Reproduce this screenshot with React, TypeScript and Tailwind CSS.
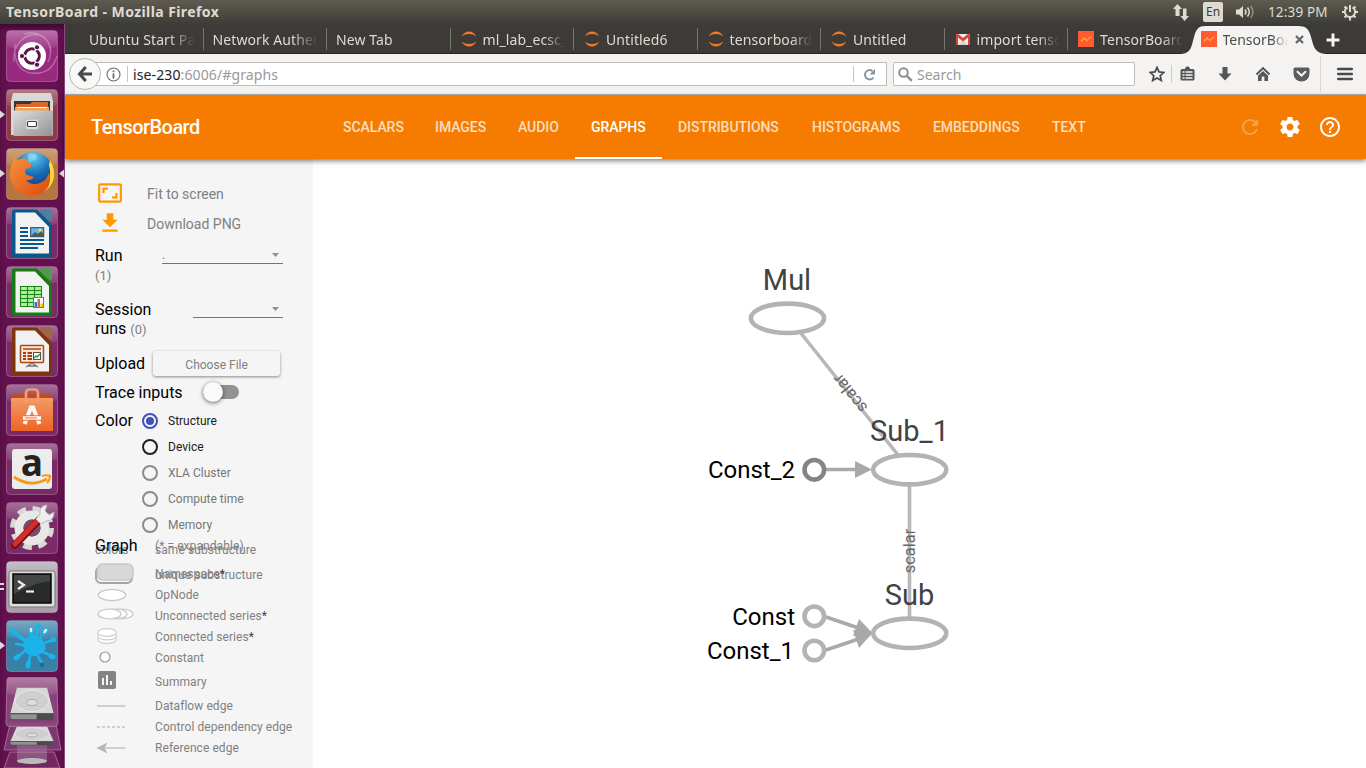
import React from "react";

const UI = "font-['Noto_Sans','Open_Sans',sans-serif]";

function Jupyter() {
  return (
    <svg width="16" height="16" viewBox="0 0 16 16" className="shrink-0">
      <path d="M.8 5.6C2.2 2.4 5 .6 8 .6s5.800 1.800 7.200 5C13.300 3.900 10.800 3.100 8 3.100S2.700 3.900.8 5.600z" fill="#f37726" />
      <path d="M.8 10.400C2.200 13.600 5 15.400 8 15.400s5.800-1.800 7.200-5c-1.900 1.700-4.400 2.500-7.200 2.500s-5.300-.8-7.200-2.500z" fill="#f37726" />
    </svg>
  );
}

function Gmail() {
  return (
    <svg width="16" height="16" viewBox="0 0 16 16" className="shrink-0">
      <rect x="1" y="3" width="14" height="11" rx="1" fill="#eee" />
      <path d="M3 14l5-5 5 5z" fill="#d5d5d5" />
      <path d="M1 14V4.500C1 3 2.500 2.500 3.500 3.300L8 7l4.500-3.700C13.500 2.500 15 3 15 4.500V14h-2V6.500L8 10.500 3 6.500V14z" fill="#d9453a" />
    </svg>
  );
}

function TbIcon() {
  return (
    <svg width="16" height="16" viewBox="0 0 16 16" className="shrink-0">
      <rect width="16" height="16" fill="#ff5a30" />
      <path d="M3 10.500L6.200 7l2.600 2.600L13 5.500" fill="none" stroke="#ffb02e" strokeWidth="1.300" />
    </svg>
  );
}

const tabs = [
  { label: "Ubuntu Start Page", icon: null },
  { label: "Network Authentication", icon: null },
  { label: "New Tab", icon: null },
  { label: "ml_lab_ecsc_306", icon: <Jupyter /> },
  { label: "Untitled6", icon: <Jupyter /> },
  { label: "tensorboard_basic", icon: <Jupyter /> },
  { label: "Untitled", icon: <Jupyter /> },
  { label: "import tensorflow", icon: <Gmail /> },
  { label: "TensorBoard", icon: <TbIcon /> },
];

function TopPanel() {
  return (
    <header className={`flex h-6 shrink-0 items-center justify-between bg-linear-to-b from-[#5e5b50] to-[#3e3d38] pl-1.5 pr-[7px] text-[#dfdbd2] ${UI}`}>
      <span className="text-[14px] leading-6 font-bold tracking-[0.42px]">TensorBoard - Mozilla Firefox</span>
      <div className="flex items-center">
        <svg width="18" height="18" viewBox="0 0 18 18" fill="#dfdbd2">
          <path d="M5.500 1l4.500 5H7.500v7h-4V6H1zM12.500 18L8.500 13H11V5.500h3.500V13H17z" />
        </svg>
        <span className="ml-[13px] flex h-5 w-5 items-center justify-center rounded-[2px] bg-[#dfdbd2] text-[12px] text-[#3c3b37]">En</span>
        <svg width="22" height="18" viewBox="0 0 22 18" className="ml-3" fill="none" stroke="#dfdbd2" strokeWidth="1.500">
          <path d="M1 6.500h3L8 3v12l-4-3.500H1z" fill="#dfdbd2" stroke="none" />
          <path d="M10 6.500q2 2.500 0 5M12.500 4.500q3.500 4.500 0 9" />
          <path d="M15.500 3q5 6 0 12" opacity=".45" />
        </svg>
        <span className="ml-[11px] w-[62px] text-[13.500px] tracking-[0.15px] whitespace-nowrap">12:39 PM</span>
        <svg width="18" height="18" viewBox="0 0 18 18" className="ml-[11px]" fill="none" stroke="#dfdbd2">
          <path d="M6.500 4.300a5.200 5.200 0 1 0 5 0" strokeWidth="2" />
          <path d="M9 2v7" strokeWidth="2" />
          <path d="M3.500 3.500l2 2M14.500 3.500l-2 2M1 9h3M14 9h3M3.500 14.500l2-2M14.500 14.500l-2-2M9 14v3.500" strokeWidth="2" />
        </svg>
      </div>
    </header>
  );
}

function TabStrip() {
  return (
    <div className={`flex h-[30px] shrink-0 border-b border-[#262522] bg-[#3c3b37] pl-[15px] text-[14px] text-[#dfdbd2] ${UI}`}>
      {tabs.map((t, i) => (
        <div key={i} className="flex h-[30px] w-[123.5px] shrink-0 items-center">
          <div className={`flex min-w-0 flex-1 items-center gap-[6px] ${t.icon ? "pl-[10px]" : "pl-[9px]"}`}>
            {t.icon}
            <span className="flex-1 overflow-hidden mask-r-from-75% whitespace-nowrap tracking-[0.1px]">{t.label}</span>
          </div>
          <span className={`ml-[8px] h-[22px] w-px ${i === 8 ? "bg-transparent" : "bg-[#77756e]"}`} />
        </div>
      ))}
      <div className="relative -ml-[11px] h-[30px] w-[146px] shrink-0">
        <svg width="146" height="30" viewBox="0 0 146 30" className="absolute inset-0">
          <path d="M0 30C10 29 10 24 13 13C15 5 18 2 24 2H117C125 2 128 5 130 13C133 24 134 29 145 30z" fill="#f4f3f1" />
        </svg>
        <div className="relative flex h-[30px] items-center pl-[20px] text-[#4c4c4c]">
          <TbIcon />
          <span className="ml-1.5 w-[65px] overflow-hidden mask-r-from-75% whitespace-nowrap">TensorBoard</span>
          <svg width="9" height="9" viewBox="0 0 9 9" className="ml-[7px]"><path d="M1 1l7 7M8 1L1 8" stroke="#666" strokeWidth="2.300" /></svg>
        </div>
      </div>
      <svg width="14" height="14" viewBox="0 0 14 14" className="-ml-[1px] mt-[9px]"><path d="M7 0.500v13M.5 7h13" stroke="#f4f3f1" strokeWidth="3" /></svg>
    </div>
  );
}

function NavBar() {
  return (
    <div className={`flex h-[41px] shrink-0 items-center border-b border-[#b6b4b0] bg-[#f4f3f1] text-[14px] ${UI}`}>
      <div className="z-10 ml-[4px] flex h-8 w-8 shrink-0 items-center justify-center rounded-full border border-[#b9b7b3] bg-[#f8f8f7]">
        <svg width="16" height="16" viewBox="0 0 16 16" fill="none" stroke="#4a4a4a" strokeWidth="3"><path d="M8.800 1L2.500 8l6.300 7M2.800 8H15" /></svg>
      </div>
      <div className="-ml-[7px] flex h-6 w-[793px] shrink-0 items-center border border-[#bfbdb8] bg-white pl-[11px]">
        <svg width="15" height="15" viewBox="0 0 15 15" fill="none" stroke="#6b6b6b"><circle cx="7.500" cy="7.500" r="6.500" strokeWidth="1.100" /><path d="M7.500 6.500v5M7.500 3.500v1.700" strokeWidth="1.800" /></svg>
        <span className="ml-[6px] h-4 w-px bg-[#c4c4c4]" />
        <span className="ml-[5px] text-[#999] tracking-[0.12px]"><span className="text-[#222]">ise-230</span>:6006/#graphs</span>
        <span className="ml-auto h-4 w-px bg-[#c4c4c4]" />
        <svg width="13" height="13" viewBox="0 0 13 13" className="mr-[10px] ml-[9px]" fill="none" stroke="#8392a2" strokeWidth="1.900"><path d="M10.500 9.500A4.700 4.700 0 1 1 9.500 3" /><path d="M12 1v5.500H6.500z" fill="#8392a2" stroke="none" /></svg>
      </div>
      <div className="ml-[6px] flex h-6 w-[242px] shrink-0 items-center rounded-[2px] border border-[#bfbdb8] bg-white pl-1">
        <svg width="15" height="15" viewBox="0 0 15 15" fill="none" stroke="#8f8f8f"><circle cx="5.500" cy="5.500" r="4.300" strokeWidth="2" /><path d="M8.800 8.800l5 5" strokeWidth="2.500" /></svg>
        <span className="ml-1 text-[#999]">Search</span>
      </div>
      <svg width="16" height="16" viewBox="0 0 16 16" className="ml-[14px]"><path d="M8 1.400l2 4.500 4.900.5-3.700 3.300 1.100 4.800L8 12l-4.300 2.500 1.100-4.800L1.100 6.400 6 5.900z" fill="none" stroke="#4a4a4a" strokeWidth="1.700" /></svg>
      <span className="ml-[6px] h-[18px] w-px bg-[#cfcdc9]" />
      <svg width="15" height="16" viewBox="0 0 15 16" className="ml-[8px]"><path d="M2 3h3a2.500 2.500 0 0 1 5 0h3q1.500 0 1.500 1.500v8.500q0 1.500-1.500 1.500H2Q.5 14.500.5 13V4.500Q.5 3 2 3z" fill="#555" /><path d="M2.500 6h2M5.500 6h7M2.500 9h2M5.500 9h7M2.500 12h2M5.500 12h7" stroke="#f4f3f1" strokeWidth="1.500" /></svg>
      <svg width="14" height="16" viewBox="0 0 14 16" className="ml-[23px]"><path d="M4.500 1h5v6.500h4L7 14.500.5 7.500h4z" fill="#555" /></svg>
      <svg width="16" height="16" viewBox="0 0 16 16" className="ml-[23px]"><path d="M8 .8L.8 7.800l1.400 1.400L8 3.600l5.800 5.600 1.400-1.400z M3 9.700L8 5l5 4.700v5.300H9.400v-4.500H6.600V15H3z" fill="#555" /></svg>
      <svg width="17" height="15" viewBox="0 0 17 15" className="ml-[22px]"><path d="M2 .5h13q1.500 0 1.500 1.500v4.500a8 8 0 0 1-16 0V2Q.5.5 2 .5z" fill="#5c5c5c" /><path d="M4.500 4.700l4 3.800 4-3.800" fill="none" stroke="#f4f3f1" strokeWidth="2" strokeLinecap="round" /></svg>
      <span className="ml-[10px] h-9 w-px bg-[#d9d7d3]" />
      <svg width="16" height="14" viewBox="0 0 16 14" className="ml-[16px]"><path d="M1.200 2h13.600M1.200 7h13.600M1.200 12h13.600" stroke="#4a4a4a" strokeWidth="2.600" strokeLinecap="round" /></svg>
    </div>
  );
}

const navItems = [
  { label: "SCALARS", w: "w-[92px]" },
  { label: "IMAGES", w: "w-[83px]" },
  { label: "AUDIO", w: "w-[73px]" },
  { label: "GRAPHS", w: "w-[87px]" },
  { label: "DISTRIBUTIONS", w: "w-[134px]" },
  { label: "HISTOGRAMS", w: "w-[121px]" },
  { label: "EMBEDDINGS", w: "w-[119px]" },
  { label: "TEXT", w: "w-[67px]" },
];

function AppBar() {
  return (
    <div className="z-10 flex h-16 shrink-0 items-center bg-[#f57c00] pl-[26px] font-[Roboto,sans-serif] text-white shadow-[0_2px_5px_rgba(0,0,0,0.5)]">
      <span className="w-[236px] text-[20px] font-medium tracking-[-0.55px]">TensorBoard</span>
      <nav className="flex h-full">
        {navItems.map((t) => (
          <span key={t.label} className={`flex h-full shrink-0 items-center border-b-2 pt-[2px] pl-4 text-[14px] font-medium tracking-[-0.05px] ${t.w} ${t.label === "GRAPHS" ? "border-white" : "border-transparent text-white/75"}`}>{t.label}</span>
        ))}
      </nav>
      <div className="ml-auto flex items-center gap-4 pr-6">
        <svg width="24" height="24" viewBox="0 0 24 24" fill="#fff" opacity=".28"><path d="M17.650 6.350C16.200 4.900 14.210 4 12 4c-4.420 0-7.990 3.580-7.990 8s3.570 8 7.990 8c3.730 0 6.840-2.550 7.730-6h-2.080c-.82 2.330-3.040 4-5.650 4-3.310 0-6-2.690-6-6s2.690-6 6-6c1.660 0 3.140.69 4.220 1.780L13 11h7V4l-2.350 2.350z" /></svg>
        <svg width="24" height="24" viewBox="0 0 24 24" fill="#fff"><path d="M19.430 12.980c.04-.32.07-.64.07-.98s-.03-.66-.07-.98l2.110-1.650c.19-.15.24-.42.12-.64l-2-3.460c-.12-.22-.39-.3-.61-.22l-2.490 1c-.52-.4-1.080-.73-1.690-.98l-.38-2.650C14.460 2.180 14.250 2 14 2h-4c-.25 0-.46.18-.49.42l-.38 2.650c-.61.25-1.170.59-1.690.98l-2.490-1c-.23-.09-.49 0-.61.22l-2 3.460c-.13.22-.07.49.12.64l2.110 1.650c-.04.32-.07.65-.07.98s.03.66.07.98l-2.110 1.650c-.19.15-.24.42-.12.64l2 3.460c.12.22.39.3.61.22l2.490-1c.52.4 1.080.73 1.690.98l.38 2.650c.03.24.24.42.49.42h4c.25 0 .46-.18.49-.42l.38-2.650c.61-.25 1.170-.59 1.690-.98l2.490 1c.23.09.49 0 .61-.22l2-3.460c.12-.22.07-.49-.12-.64l-2.110-1.650zM12 15.500c-1.930 0-3.500-1.570-3.500-3.500s1.570-3.500 3.500-3.500 3.500 1.570 3.500 3.500-1.570 3.500-3.500 3.500z" /></svg>
        <svg width="24" height="24" viewBox="0 0 24 24" fill="#fff"><path d="M11 18h2v-2h-2v2zm1-16C6.480 2 2 6.480 2 12s4.480 10 10 10 10-4.480 10-10S17.520 2 12 2zm0 18c-4.410 0-8-3.590-8-8s3.590-8 8-8 8 3.590 8 8-3.590 8-8 8zm0-14c-2.210 0-4 1.790-4 4h2c0-1.100.9-2 2-2s2 .9 2 2c0 2-3 1.750-3 5h2c0-2.250 3-2.500 3-5 0-2.210-1.790-4-4-4z" /></svg>
      </div>
    </div>
  );
}

function Dropdown({ value, width }: { value: string; width: string }) {
  return (
    <div className={`mr-[30px] ml-auto flex h-[18px] items-center justify-between border-b border-[#757575] pt-px text-[12px] text-[#777] ${width}`}>
      <span>{value}</span>
      <svg width="7" height="4" viewBox="0 0 7 4" className="mr-1"><path d="M0 0h7L3.500 4z" fill="#8f8f8f" /></svg>
    </div>
  );
}

const radios = [
  { label: "Structure", on: true, color: "#3f51b5", cls: "text-[#212121]" },
  { label: "Device", on: false, color: "#212121", cls: "text-[#212121]" },
  { label: "XLA Cluster", on: false, color: "#8b8b8b", cls: "text-[#777]" },
  { label: "Compute time", on: false, color: "#8b8b8b", cls: "text-[#777]" },
  { label: "Memory", on: false, color: "#8b8b8b", cls: "text-[#777]" },
];

function LegendRow({ label, star, h, children }: { label: string; star?: boolean; h: string; children: React.ReactNode }) {
  return (
    <div className={`flex items-center ${h}`}>
      <div className="flex w-[60px] shrink-0 items-center">{children}</div>
      <span className="whitespace-nowrap">{label}{star && <span className="text-[#444]">*</span>}</span>
    </div>
  );
}

function Sidebar() {
  return (
    <aside className="flex w-[248px] shrink-0 flex-col overflow-hidden bg-[#f5f5f5] pt-5 pl-[30px] font-[Roboto,sans-serif] text-[12px] text-[#808080]">
      <div className="flex h-[30px] shrink-0 items-center text-[14px]">
        <svg width="26" height="26" viewBox="0 0 24 24" fill="#ff9800" className="-mt-[2px] ml-[2px]"><path d="M19 12h-2v3h-3v2h5v-5zM7 9h3V7H5v5h2V9zm14-6H3c-1.100 0-2 .9-2 2v14c0 1.100.9 2 2 2h18c1.100 0 2-.9 2-2V5c0-1.100-.9-2-2-2zm0 16.010H3V4.990h18v14.020z" /></svg>
        <span className="ml-6">Fit to screen</span>
      </div>
      <div className="flex h-[30px] shrink-0 items-center text-[14px]">
        <svg width="26" height="26" viewBox="0 0 24 24" fill="#ff9800" className="-mt-[2px] ml-[2px]"><path d="M19 9h-4V3H9v6H5l7 7 7-7zM5 18v2h14v-2H5z" /></svg>
        <span className="ml-6">Download PNG</span>
      </div>
      <div className="mt-[7px] flex h-[54px] shrink-0 items-start">
        <div className="flex flex-col text-[16px] leading-[19px] text-black">Run<span className="text-[13px] leading-[21px] text-[#808080]">(1)</span></div>
        <Dropdown value="." width="w-[121px]" />
      </div>
      <div className="flex h-[50px] shrink-0 items-start">
        <div className="w-[70px] text-[16px] leading-[19px] text-black">Session runs <span className="text-[13px] text-[#808080]">(0)</span></div>
        <Dropdown value="" width="w-[90px]" />
      </div>
      <div className="flex h-[26px] shrink-0 items-center">
        <span className="pt-[2px] text-[16px] text-black">Upload</span>
        <span className="ml-2 flex h-[25px] w-[127px] items-center justify-center rounded-[3px] bg-[#f5f5f5] pt-[4px] shadow-[0_1px_3px_rgba(0,0,0,0.45)]">Choose File</span>
      </div>
      <div className="flex h-8 shrink-0 items-center">
        <span className="w-[108px] pt-[2px] text-[16px] text-black">Trace inputs</span>
        <span className="flex h-[14px] w-9 items-center rounded-full bg-[#929292]">
          <span className="h-5 w-5 shrink-0 rounded-full bg-[#fafafa] shadow-[0_1px_4px_rgba(0,0,0,0.6)]" />
        </span>
      </div>
      <div className="flex h-[130px] shrink-0">
        <span className="w-[47px] pt-[2px] text-[16px] leading-[22px] text-black">Color</span>
        <div className="flex flex-col">
          {radios.map((r) => (
            <div key={r.label} className="flex h-[26px] items-center">
              <svg width="16" height="16" viewBox="0 0 16 16"><circle cx="8" cy="8" r="7" fill="none" stroke={r.color} strokeWidth="2" />{r.on && <circle cx="8" cy="8" r="4" fill={r.color} />}</svg>
              <span className={`ml-[10px] ${r.cls}`}>{r.label}</span>
            </div>
          ))}
        </div>
      </div>
      <div className="relative -mt-[2px] flex h-[20px] shrink-0 items-center tracking-[0.07px]">
        <div className="absolute top-[6px] left-0 w-[218px]">
          <div className="flex h-[16px] items-center"><span className="w-[60px]">colors</span><span>same substructure</span></div>
          <div className="mt-[9px] flex h-[16px] items-center">
            <span className="h-[18px] w-[38px] rounded-[6px] border-2 border-[#a5a5a5]" /><span className="ml-[22px]">unique substructure</span>
          </div>
        </div>
        <span className="relative w-[60px] text-[16px] tracking-normal text-black">Graph</span><span className="relative">(* = expandable)</span>
      </div>
      <div className="relative mt-[7px] tracking-[0.07px]">
        <LegendRow label="Namespace" star h="h-[21px]"><svg width="40" height="20" viewBox="0 0 40 20" className="-mt-[1px]"><rect x="2.500" y="1" width="35.500" height="16" rx="5.500" fill="#d8d8d8" stroke="#c8c8c8" strokeWidth="1.600" /></svg></LegendRow>
        <LegendRow label="OpNode" h="h-[21px]"><svg width="40" height="14" viewBox="0 0 40 14"><ellipse cx="17" cy="7" rx="13.700" ry="5.600" fill="#fff" stroke="#c8c8c8" strokeWidth="1.400" /></svg></LegendRow>
        <LegendRow label="Unconnected series" star h="h-[21px]"><svg width="40" height="14" viewBox="0 0 40 14" className="-mt-[3px]" fill="#fff" stroke="#ccc" strokeWidth="1.400"><ellipse cx="26.500" cy="7" rx="11.500" ry="4.900" /><ellipse cx="20.500" cy="7" rx="11.500" ry="4.900" /><ellipse cx="14.500" cy="7" rx="11.500" ry="4.900" /></svg></LegendRow>
        <LegendRow label="Connected series" star h="h-[21px]"><svg width="40" height="18" viewBox="0 0 40 18" className="-mt-[2px]" fill="#fff" stroke="#ccc" strokeWidth="1.200"><ellipse cx="12" cy="12.500" rx="9.300" ry="3.900" /><ellipse cx="12" cy="9" rx="9.300" ry="3.900" /><ellipse cx="12" cy="5.500" rx="9.300" ry="3.900" /></svg></LegendRow>
        <LegendRow label="Constant" h="h-[21px]"><svg width="20" height="14" viewBox="0 0 20 14" className="-mt-[2px]"><circle cx="10" cy="7" r="5" fill="#fff" stroke="#999" strokeWidth="1.200" /></svg></LegendRow>
        <LegendRow label="Summary" h="h-[27px]"><svg width="24" height="24" viewBox="0 0 24 24" fill="#848484" className="-mt-[3px]"><path d="M19 3H5c-1.100 0-2 .9-2 2v14c0 1.100.9 2 2 2h14c1.100 0 2-.9 2-2V5c0-1.100-.9-2-2-2zM9 17H7v-7h2v7zm4 0h-2V7h2v10zm4 0h-2v-4h2v4z" /></svg></LegendRow>
        <LegendRow label="Dataflow edge" h="h-[21px]"><svg width="40" height="4"><path d="M2 2h28.500" stroke="#c2c2c2" strokeWidth="1.500" /></svg></LegendRow>
        <LegendRow label="Control dependency edge" h="h-[21px]"><svg width="40" height="4"><path d="M2 2h28" stroke="#c2c2c2" strokeWidth="1.500" strokeDasharray="3 2" /></svg></LegendRow>
        <LegendRow label="Reference edge" h="h-[21px]"><svg width="40" height="12" viewBox="0 0 40 12"><path d="M8 6h22.500" stroke="#c2c2c2" strokeWidth="1.500" /><path d="M1.500 6L12.500.5 9.500 6l3 5.500z" fill="#b5b5b5" /></svg></LegendRow>
      </div>
    </aside>
  );
}

function Graph() {
  return (
    <svg width="1053" height="609" viewBox="313 159 1053 609" className="min-w-0 flex-1 bg-white font-[Roboto,sans-serif]">
      <g stroke="#b8b8b8" strokeWidth="3.600" fill="none">
        <path d="M800 332L898 455" />
        <path d="M909.500 485V618" />
      </g>
      <g stroke="#a9a9a9" strokeWidth="3.600">
        <path d="M826 469.500H858M826 617L860 628.500M826 650L860 638.500" />
      </g>
      <g fill="#a9a9a9">
        <path d="M855 461L872 469.500 855 478z" />
        <path d="M859 619L872.500 633 853 636z" />
        <path d="M859 648L872.500 633 853 630z" />
      </g>
      <g fill="#fff" stroke="#b3b3b3" strokeWidth="4.600">
        <ellipse cx="787.500" cy="318.300" rx="36.600" ry="14.700" />
        <ellipse cx="909.700" cy="469.700" rx="36.600" ry="14.700" />
        <ellipse cx="909.700" cy="633.300" rx="36.600" ry="14.700" />
        <circle cx="814.300" cy="616.300" r="9.800" />
        <circle cx="814.300" cy="650.500" r="9.800" />
        <circle cx="814.300" cy="469.800" r="9.800" stroke="#848484" />
      </g>
      <g fill="#424242" fontSize="29" textAnchor="middle">
        <text x="787" y="290">Mul</text>
        <text x="909.500" y="441">Sub_1</text>
        <text x="909.500" y="605">Sub</text>
      </g>
      <g fill="#000" fontSize="24" textAnchor="end">
        <text x="795" y="478">Const_2</text>
        <text x="795" y="625">Const</text>
        <text x="794" y="659">Const_1</text>
      </g>
      <g fill="#666" fontSize="16.500" textAnchor="middle">
        <text transform="translate(909 551) rotate(-90)" y="5.500">scalar</text>
        <text transform="translate(850 393.500) rotate(231.400)" y="5.500">scalar</text>
      </g>
    </svg>
  );
}

function Doc({ edge, children }: { edge: string; children: React.ReactNode }) {
  return (
    <>
      <path d="M6 4Q6 2.500 8 2.500H31L46 18V48Q46 50 44 50H8Q6 50 6 48z" fill={edge} />
      <path d="M34 2.500H44Q46 2.500 46 4.500V15Q38 12 34 2.500z" fill={edge} />
      <path d="M34 2.500H44Q46 2.500 46 4.500V15Q38 12 34 2.500z" fill="#fff" opacity=".25" />
      <path d="M9.500 5.500H29L43 20V46.500H9.500z" fill="#f2f2f2" />
      {children}
    </>
  );
}

function Tile({ bg, children, mark }: { bg: string; children: React.ReactNode; mark?: string }) {
  return (
    <div className="relative flex h-[52px] shrink-0 pl-[6px]">
      <svg width="52" height="52" viewBox="0 0 52 52">
        <rect x=".5" y=".5" width="51" height="51" rx="4" fill={bg} stroke="#fff" strokeOpacity=".25" />
        <path d="M4 1H48Q51 1 51 4V16Q26 26 1 16V4Q1 1 4 1z" fill="url(#gloss)" />
        {children}
      </svg>
      {mark && (
        <svg width="65" height="52" viewBox="0 0 65 52" className="absolute top-0 left-0" fill="#dcd8dc">
          {mark === "two" ? <path d="M0 22h4v2H0zM0 27h4v2H0z" /> : <path d="M0 21.500L5 25.500 0 29.500z" />}
          {mark === "active" && <path d="M64 21.500L59 25.500 64 29.500z" />}
        </svg>
      )}
    </div>
  );
}

function Disk() {
  return (
    <>
      <path d="M9 9H41L48 35H2z" fill="#d6d6d6" />
      <path d="M2 35H48V40Q48 42 46 42H4Q2 42 2 40z" fill="#4c4c4c" />
      <path d="M2 36H30V41H4Q2 41 2 39z" fill="#929292" />
      <ellipse cx="25" cy="22.500" rx="18" ry="11" fill="#cfcfcf" stroke="#e8e8e8" />
      <ellipse cx="25" cy="24" rx="6" ry="3.200" fill="#ddd" stroke="#a6a6a6" />
    </>
  );
}

function Launcher() {
  return (
    <div className="flex w-[65px] shrink-0 flex-col gap-[7px] overflow-hidden border-r-[1.500px] border-[#8a4a80] bg-[#64114f] pt-[6px] shadow-[inset_0_5px_6px_-2px_rgba(20,0,20,0.6)]">
      <svg width="0" height="0" className="absolute">
        <defs>
          <linearGradient id="gloss" x1="0" y1="0" x2="0" y2="1"><stop offset="0" stopColor="#fff" stopOpacity=".32" /><stop offset="1" stopColor="#fff" stopOpacity=".04" /></linearGradient>
          <linearGradient id="steel" x1="0" y1="0" x2="1" y2="1"><stop offset="0" stopColor="#dedede" /><stop offset="1" stopColor="#929292" /></linearGradient>
          <radialGradient id="globe" cx=".5" cy=".1" r=".8"><stop offset="0" stopColor="#5fd0f5" /><stop offset=".6" stopColor="#1769b5" /><stop offset="1" stopColor="#123f87" /></radialGradient>
          <linearGradient id="fox" x1="0" y1="0" x2="1" y2="1"><stop offset="0" stopColor="#f7923c" /><stop offset="1" stopColor="#dc4a10" /></linearGradient>
          <linearGradient id="bag" x1="0" y1="0" x2="0" y2="1"><stop offset="0" stopColor="#f29a66" /><stop offset="1" stopColor="#ee6428" /></linearGradient>
        </defs>
      </svg>
      <Tile bg="#982b80">
        <g fill="none" stroke="#fff" strokeOpacity=".3" strokeWidth="1.300"><path d="M8 32C6 14 20 2 34 5C44 9 47 22 42 32M9 14C7 35 16 45 33 43C42 42 48 36 51 26M18 4C31 0 44 7 45 22" /></g>
        <circle cx="26" cy="26" r="14" fill="#fff" />
        <circle cx="26" cy="26" r="7.300" fill="none" stroke="#5b154a" strokeWidth="3" />
        <path d="M26 26L13 26M26 26L32.500 14.700M26 26L32.500 37.300" stroke="#fff" strokeWidth="1.500" />
        <circle cx="26" cy="26" r="5.500" fill="#fff" />
        <g fill="#5b154a" stroke="#fff" strokeWidth="1"><circle cx="16" cy="26" r="2.600" /><circle cx="31" cy="17.300" r="2.600" /><circle cx="31" cy="34.700" r="2.600" /></g>
      </Tile>
      <Tile bg="#8d3b46" mark="one">
        <path d="M7 4H45L47 12V46H5V12z" fill="#d8d8d8" />
        <rect x="8" y="12" width="36" height="12" fill="#3b3532" />
        <path d="M10 15H24L26 13H42V24H10z" fill="#d9692e" /><path d="M9 18H43V24H9z" fill="#f4a24e" /><path d="M11 18.500H41" stroke="#fff" />
        <path d="M7 21.500H47L46.500 47H7.500z" fill="url(#steel)" />
        <rect x="19.500" y="30" width="13" height="10.500" rx="2" fill="#ddd" stroke="#b5b5b5" /><rect x="21.500" y="32.500" width="9" height="5" rx="1" fill="#fff" stroke="#444" strokeWidth="1.200" />
      </Tile>
      <Tile bg="#b6763f" mark="active">
        <circle cx="27" cy="24" r="20" fill="url(#globe)" />
        <path d="M22 6C30 4 33 9 30 12C25 12 22 16 23 20z" fill="#fff" opacity=".25" />
        <path d="M40 12C47 21 45 34 36 41L30 46C43 44 49 34 48 24C47.500 18 45 14 44 12L43 17z" fill="#ffd83a" />
        <path d="M7 13L9 8L11 12L18 10Q21 11 22 15L25 16V19L20 21Q18 25 21 27L28 29Q25 33 20 32C24 38 34 37 40 31L43 25C47 37 39 47 27 47.500C13 48 3 37 4 24Q5 17 7 13z" fill="url(#fox)" />
      </Tile>
      <Tile bg="#7b2c68">
        <Doc edge="#08588b">
          <path d="M14 21H22M14 25H22M14 29H22M14 33H38M14 37H38M14 41H32" stroke="#085889" strokeWidth="1.800" />
          <rect x="24.700" y="20.700" width="13" height="9" fill="#6db5ee" stroke="#134466" /><path d="M25 29L29 25L32 27L35 24L37.500 27V29z" fill="#5f5b30" /><circle cx="34" cy="23" r="1.500" fill="#ffe14a" />
        </Doc>
      </Tile>
      <Tile bg="#7b2c68">
        <Doc edge="#137d12">
          <path d="M14.500 20.500H35.500V40.500H14.500zM14.500 24.500H35.500M14.500 28.500H35.500M14.500 32.500H35.500M14.500 36.500H35.500M21.500 20.500V40.500M28.500 20.500V40.500" fill="#b4ec9e" stroke="#168614" strokeWidth="1.100" />
          <rect x="27.500" y="31.500" width="10" height="10" fill="#fff" stroke="#777" /><path d="M28.500 36H31V41H28.500z" fill="#1a85d6" /><path d="M31.500 33H34V41H31.500z" fill="#e86427" /><path d="M34.500 37.500H37V41H34.500z" fill="#f7c600" />
        </Doc>
      </Tile>
      <Tile bg="#7b2c68">
        <Doc edge="#803407">
          <rect x="14.500" y="20.500" width="23" height="17" rx="1" fill="#fbe9dd" stroke="#a74818" strokeWidth="1.500" />
          <path d="M17 24H35" stroke="#d2662f" strokeWidth="2" /><path d="M17 28H20M17 31H20M17 34H20M21.500 28H26M21.500 31H26M21.500 34H26" stroke="#a13d12" strokeWidth="1.800" />
          <rect x="27.500" y="27.500" width="7" height="7" fill="#fff" stroke="#555" /><path d="M28 33L30 31L31 32L34 29" stroke="#22a03a" strokeWidth="1.400" fill="none" /><path d="M26 38L20 42M26 38L32 42M22 41H30" stroke="#777" strokeWidth="1.500" />
        </Doc>
      </Tile>
      <Tile bg="#7b2c68">
        <path d="M5 14H47V47H5z" fill="url(#bag)" /><path d="M5 14L8 10H44L47 14z" fill="#bd4c20" />
        <path d="M20 19V9Q20 5.500 24 5.500H28Q32 5.500 32 9V19" fill="none" stroke="#f29b72" strokeWidth="2.700" />
        <path d="M18.500 40L25 23.500H27L33.500 40" fill="none" stroke="#fff" strokeWidth="4" /><path d="M17 34H35" stroke="#ed6b33" strokeWidth="5.500" /><path d="M17 34H35" stroke="#fff" strokeWidth="3.500" /><path d="M19 34H31" stroke="#ed6b33" />
      </Tile>
      <Tile bg="#7b2c68">
        <rect x="6" y="6" width="40" height="40" rx="3" fill="#ececec" />
        <text x="26" y="33" textAnchor="middle" fontFamily="Open Sans, sans-serif" fontSize="37" fontWeight="700" fill="#222">a</text>
        <path d="M8 34Q24 45 41 36" fill="none" stroke="#f79a13" strokeWidth="2.800" /><path d="M36 33Q40 31.500 44 33Q44 37 41 40" fill="none" stroke="#f79a13" strokeWidth="2" />
      </Tile>
      <Tile bg="#7b2c68">
        <circle cx="26" cy="26" r="19" fill="none" stroke="#d8d8d5" strokeWidth="6" strokeDasharray="8.500 6.420" />
        <circle cx="26" cy="26" r="13" fill="none" stroke="#e8e8e5" strokeWidth="9" /><circle cx="26" cy="26" r="8.500" fill="#7b4b6e" />
        <path d="M9 43L33 18" stroke="#7b1010" strokeWidth="7.500" strokeLinecap="round" /><path d="M9 42L32 18" stroke="#d52e2a" strokeWidth="5" strokeLinecap="round" />
        <path d="M30 17L34 12Q33 4 41 3L39 9L43 13L48 10Q48 19 40 19L35 22z" fill="#eee" stroke="#bbb" />
      </Tile>
      <Tile bg="#a99faa" mark="two">
        <rect x="3" y="10" width="46" height="36" rx="2" fill="#ddd" stroke="#777" /><rect x="7" y="13" width="38" height="29" fill="#292b2b" stroke="#080808" strokeWidth="1.500" />
        <path d="M8 14H44V20Q28 22 8 33z" fill="#fff" opacity=".13" /><path d="M12 20L18 24L12 28" fill="none" stroke="#eee" strokeWidth="2.200" /><path d="M20 30.500H28" stroke="#eee" strokeWidth="2.200" />
      </Tile>
      <Tile bg="#397fa6" mark="one">
        <g fill="none" stroke="#1cb2ea" strokeLinecap="round">
          <path d="M26 25L25 8M29 24L32 6" strokeWidth="3" />
          <path d="M28 25L40 10M28 26L47 20M30 29L46 36M28 30L36 43M26 28L22 45M24 27L10 38M24 26L10 24" strokeWidth="2.600" />
          <path d="M25 25L6 11" strokeWidth="4" />
          <path d="M12 36.500L10 38M22.500 43L22 46M25 9V12M32 5.500V8M40 10L38.500 12M45 36L47 37M46 20L48 19.500M6 11L9 13" strokeWidth="5" />
        </g>
        <path d="M18 22Q21 16 28 15Q36 16 38 23Q42 28 37 32Q32 37 26 36Q18 34 18 28Q16 25 18 22z" fill="#1cb2ea" />
        <path d="M25 9V11M40 10L38.500 12" stroke="#d8f5ff" strokeWidth="2.500" strokeLinecap="round" /><circle cx="36" cy="45" r="2.400" fill="#0d729e" />
      </Tile>
      <svg width="65" height="95" viewBox="0 0 65 95" className="-mt-[2px] shrink-0">
        <path d="M10 75H54L60 91H4z" fill="#fff" fillOpacity=".1" stroke="#b387aa" strokeWidth=".7" />
        <rect x="17" y="68" width="30" height="17" fill="#ddd" opacity=".25" /><ellipse cx="32" cy="84" rx="15" ry="3" fill="#bbb" />
        <path d="M10 47H56L61 73H4z" fill="#a674a0" fillOpacity=".4" stroke="#b387aa" strokeWidth=".7" />
        <g transform="translate(8.500 44) scale(.94 .58)"><Disk /></g>
        <path d="M9 .5H55Q57 .5 57 3L58 46Q58 49.500 54 49.500H10Q6 49.500 6 46L7 3Q7 .5 9 .5z" fill="#8f4a81" fillOpacity=".85" stroke="#b387aa" strokeWidth=".7" />
        <path d="M9 1H55Q57 1 57 4V16Q32 26 7 16V4Q7 1 9 1z" fill="url(#gloss)" />
        <g transform="translate(8.500 2) scale(.94 .98)"><Disk /></g>
      </svg>
    </div>
  );
}

export default function App() {
  return (
    <div className="flex h-[768px] w-[1366px] flex-col overflow-hidden">
      <TopPanel />
      <div className="flex min-h-0 flex-1">
        <Launcher />
        <div className="flex w-[1301px] shrink-0 flex-col">
          <TabStrip />
          <NavBar />
          <AppBar />
          <div className="flex min-h-0 flex-1">
            <Sidebar />
            <Graph />
          </div>
        </div>
      </div>
    </div>
  );
}
